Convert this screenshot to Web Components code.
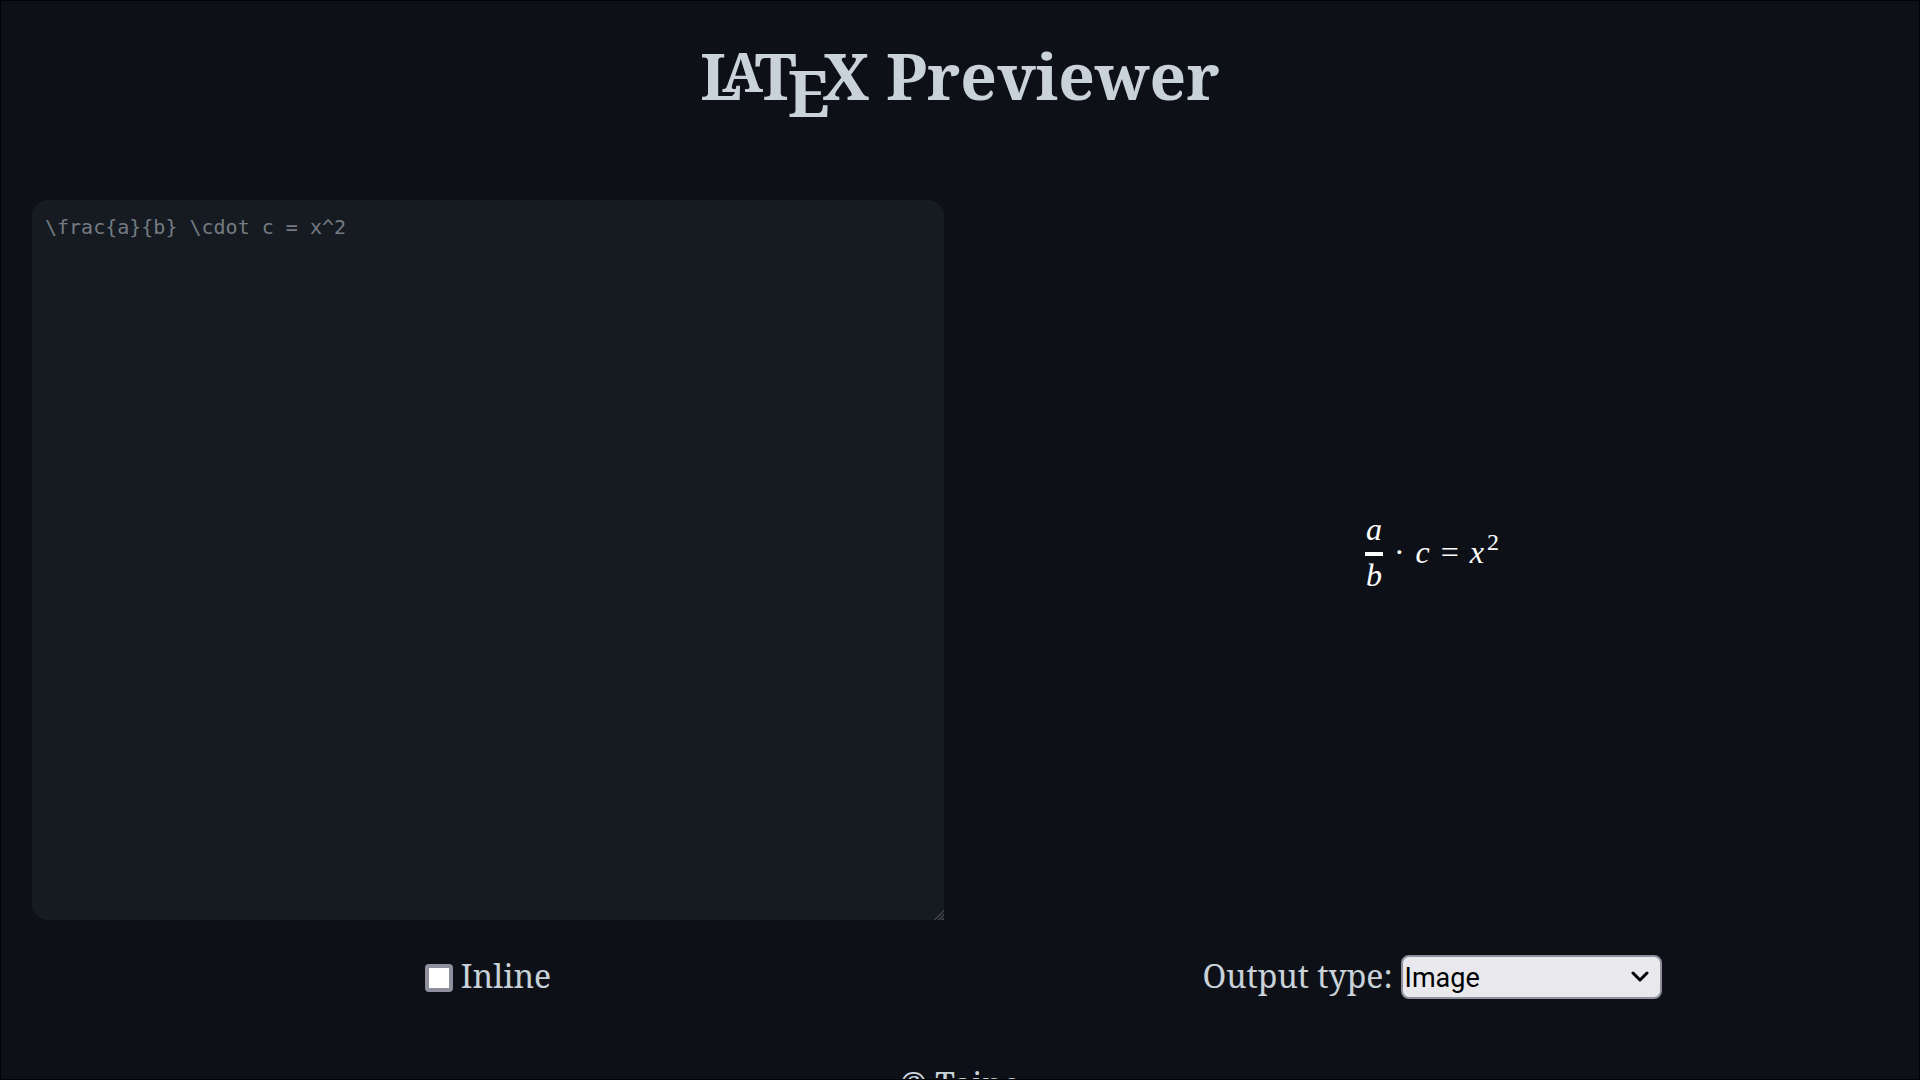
<!DOCTYPE html>
<html lang="en">
<head>
<meta charset="utf-8">
<title>LaTeX Previewer</title>
<style>
html { background: #0d1117; scrollbar-width: none; }
body { margin: 0; color: #c9d1d9; font-family: "Noto Serif", "DejaVu Serif Condensed", "DejaVu Serif", serif; font-size: 32px; line-height: 44px; }
</style>
</head>
<body>
<latex-previewer></latex-previewer>
<script>
const define = (name, html) => {
  const template = document.createElement('template');
  template.innerHTML = html;
  customElements.define(name, class extends HTMLElement {
    constructor() {
      super();
      this.attachShadow({ mode: 'open' }).append(template.content.cloneNode(true));
    }
  });
};

define('latex-logo', `
<style>
:host { display: inline; }
.a { font-size: 54px; vertical-align: 8px; margin: 0 -8px 0 -20px; line-height: 1; }
.e { vertical-align: -17px; margin: 0 -7px 0 -9px; line-height: 1; }
</style>L<span class="a">A</span>T<span class="e">E</span>X`);

define('page-title', `
<style>
:host { display: block; text-align: center; }
h1 { margin: 0; font-size: 64px; line-height: 88px; font-weight: bold; }
</style>
<h1><slot></slot></h1>`);

define('source-editor', `
<style>
:host { display: block; }
textarea { display: block; box-sizing: border-box; width: 100%; height: 720px; margin: 0; border: 0; border-radius: 16px 16px 0 16px; padding: 13px; background: #161b22; color: #c9d1d9; font: 20px/28px "DejaVu Sans Mono", monospace; outline: none; resize: both; }
textarea::placeholder { color: #757b83; opacity: 1; }
textarea::-webkit-resizer { background: linear-gradient(135deg, transparent 66%, #3c4043 66%, #3c4043 72%, transparent 72%, transparent 78%, #3c4043 78%, #3c4043 84%, transparent 84%, transparent 90%, #3c4043 90%); }
</style>
<textarea aria-label="LaTeX source" placeholder="\\frac{a}{b} \\cdot c = x^2" spellcheck="false"></textarea>`);

define('formula-preview', `
<style>
:host { display: flex; align-items: center; justify-content: center; gap: 11px; margin-bottom: 16px; color: #fff; font: italic 32px/32px "Liberation Serif", serif; }
.frac { display: flex; flex-direction: column; align-items: center; width: 18px; line-height: 28px; }
.bar { width: 18px; height: 4px; margin: 9px 0 5px; background: #fff; }
.op { font-style: normal; }
sup { padding-left: 3px; font-size: 24px; font-style: normal; line-height: 0; vertical-align: 13px; }
</style>
<span class="frac"><span>a</span><i class="bar"></i><span>b</span></span>
<span class="op">·</span><span>c</span><span class="op">=</span><span>x<sup>2</sup></span>`);

define('check-option', `
<style>
:host { display: flex; justify-content: center; align-items: flex-start; line-height: 42px; }
label { display: flex; align-items: center; gap: 8px; }
input { appearance: none; box-sizing: border-box; width: 28px; height: 28px; margin: 4px 0 0; border: 4px solid #8f8f9d; border-radius: 4px; background: #fff; }
input:checked { background: #0060df; }
</style>
<label><input type="checkbox"><slot></slot></label>`);

define('output-select', `
<style>
:host { display: flex; justify-content: center; align-items: flex-start; gap: 8px; line-height: 42px; }
.box { display: grid; align-items: center; }
.box > * { grid-area: 1 / 1; }
select { appearance: none; box-sizing: border-box; width: 261px; height: 44px; margin: 0; padding: 2px 40px 0 2px; border: 2px solid #8f8f9d; border-radius: 8px; background: #e9e9ed; color: #000; font: 27px/36px Roboto, sans-serif; }
svg { justify-self: end; margin-right: 13px; width: 18px; height: 12px; pointer-events: none; }
</style>
<label for="type">Output type:</label>
<span class="box"><select id="type"><option>Image</option><option>SVG</option></select>
<svg viewBox="0 0 18 12"><path d="M2 2 L9 9 L16 2" fill="none" stroke="#000" stroke-width="3" stroke-linecap="round" stroke-linejoin="round"/></svg></span>`);

define('latex-previewer', `
<style>
:host { display: block; box-sizing: border-box; min-height: 100vh; padding: 32px; }
.frame { position: fixed; inset: 0; border: 1px solid #020305; pointer-events: none; }
main { display: grid; grid-template-columns: minmax(0, 1fr) minmax(0, 1fr); column-gap: 32px; row-gap: 35px; margin-top: 75px; }
footer { margin-top: 63px; text-align: center; }
</style>
<page-title><latex-logo></latex-logo> Previewer</page-title>
<main>
<source-editor></source-editor><formula-preview></formula-preview>
<check-option>Inline</check-option><output-select></output-select>
</main>
<footer>© Taine</footer>
<div class="frame"></div>`);
</script>
</body>
</html>
